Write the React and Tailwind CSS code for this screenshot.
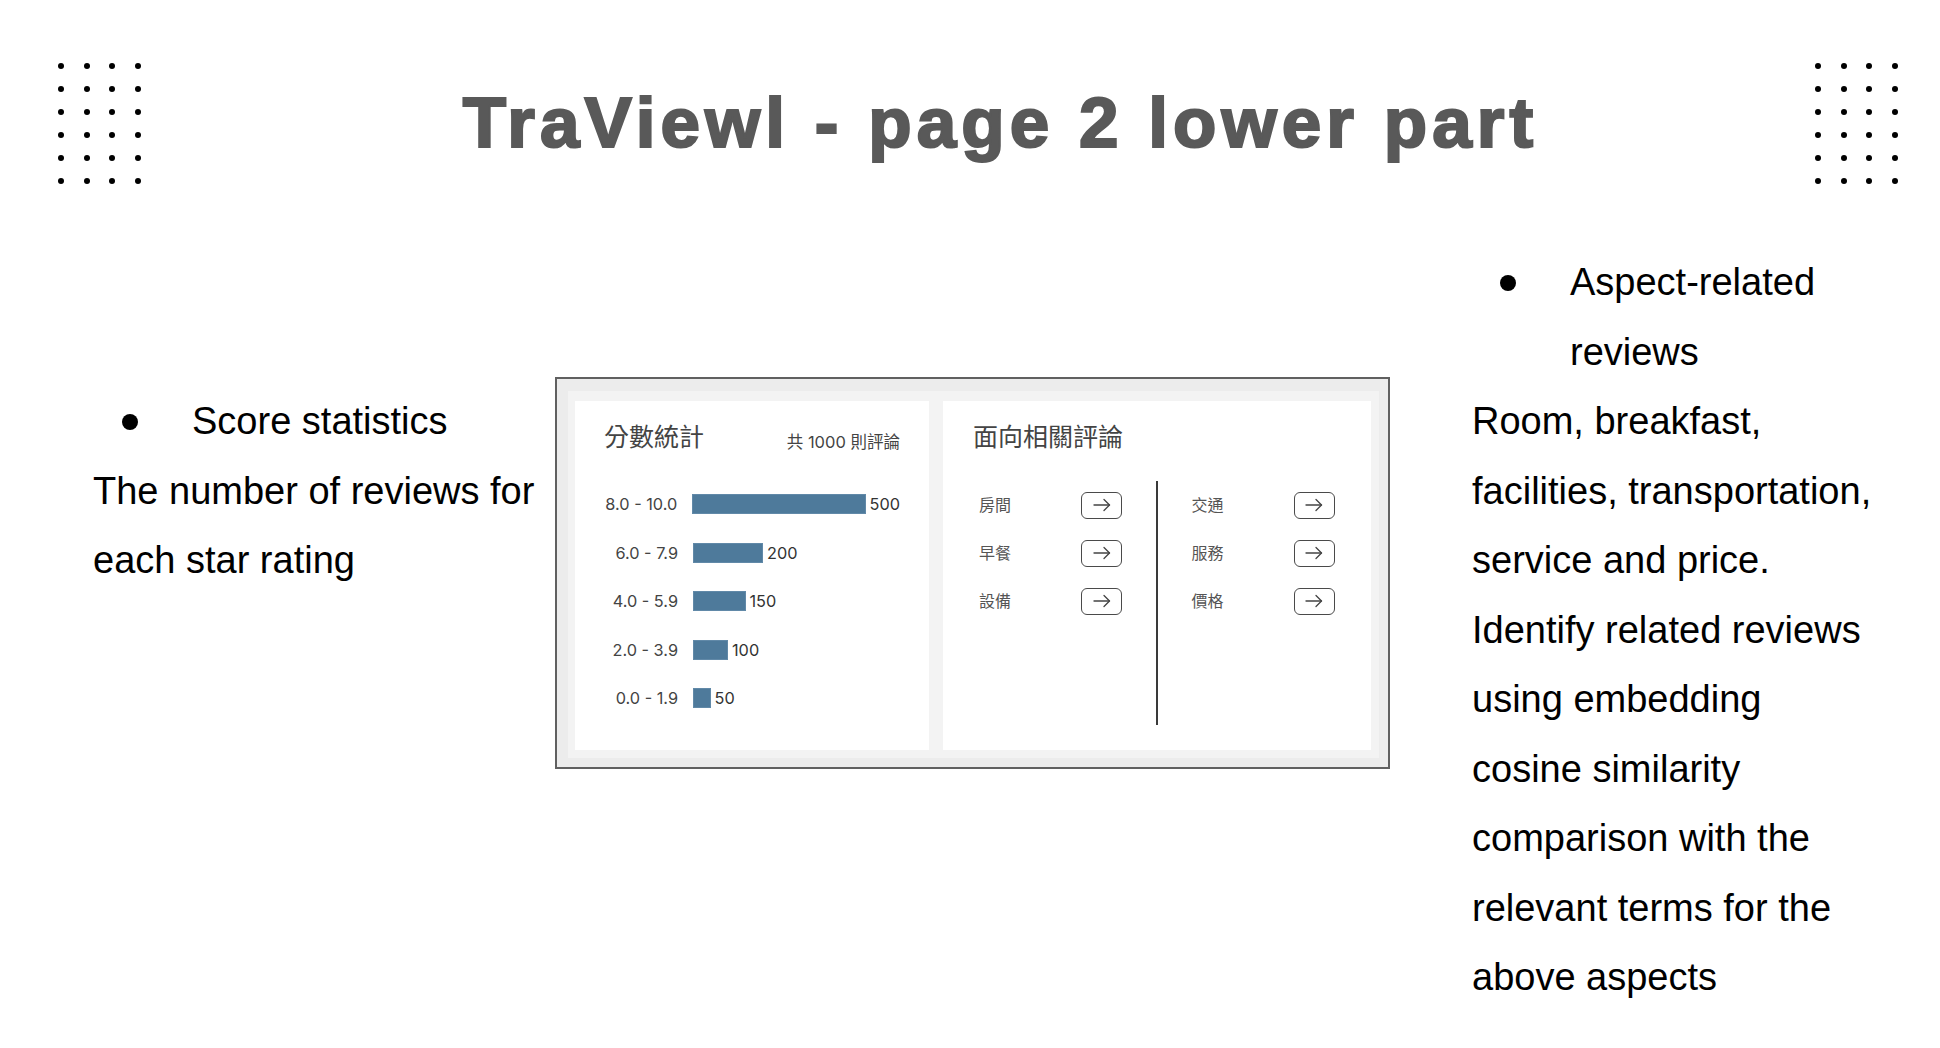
import React from 'react'

const scores = [
  ["8.0 - 10.0", 500],
  ["6.0 - 7.9", 200],
  ["4.0 - 5.9", 150],
  ["2.0 - 3.9", 100],
  ["0.0 - 1.9", 50],
];

const aspectsLeft = ["房間", "早餐", "設備"];
const aspectsRight = ["交通", "服務", "價格"];

function DotGrid() {
  return (
    <div className="grid grid-cols-4 gap-x-[19.67px] gap-y-[17px] shrink-0">
      {Array.from({ length: 24 }).map((_, i) => (
        <span key={i} className="block w-[6px] h-[6px] rounded-full bg-black" />
      ))}
    </div>
  )
}

function ArrowButton() {
  return (
    <div className="w-[41px] h-[27px] rounded-[6px] border-[1.5px] border-[#4a4a4a] flex items-center justify-center">
      <svg width="18" height="14" viewBox="0 0 18 14" fill="none" stroke="#444" strokeWidth="1.3" strokeLinecap="round" strokeLinejoin="round">
        <path d="M1 7H16.5" />
        <path d="M11 1.5L16.5 7L11 12.5" />
      </svg>
    </div>
  )
}

function AspectColumn({ items }) {
  return (
    <div className="w-[143px]">
      {items.map(name => (
        <div key={name} className="h-[48px] flex items-center justify-between">
          <span className="text-[16px] leading-none text-[#555]">{name}</span>
          <ArrowButton />
        </div>
      ))}
    </div>
  )
}

function ScorePanel() {
  return (
    <div className="mt-[131px] shrink-0 border-2 border-[#606060] bg-[#ececec] pl-[11px] pt-[12px] pr-[9px] pb-[9px] font-['Inter','Noto_Sans_CJK_TC',sans-serif]">
      <div className="bg-[#f3f3f3] pl-[7px] pt-[10px] pr-[8px] pb-[8px] flex gap-[14px]">
        {/* 分數統計 */}
        <div className="w-[354px] h-[349px] bg-white pl-[27px] pr-[29px] pt-[20px]">
          <div className="h-[32px] flex items-center justify-between pl-[2px]">
            <span className="text-[25px] leading-[32px] text-[#444]">分數統計</span>
            <span className="pt-[10px] text-[16.5px] leading-[20px] text-[#444]">共 1000 則評論</span>
          </div>
          <div className="mt-[27px]">
            {scores.map(([label, value]) => (
              <div key={label} className="h-[48.5px] flex items-center">
                <span className="w-[76px] text-right text-[16.3px] leading-none text-[#444] whitespace-nowrap">{label}</span>
                <span className="ml-[15px] h-[20px] bg-[#4e7a9b] border border-[#6189a8]" style={{ width: value * 0.35 }} />
                <span className="ml-[4px] text-[16.3px] leading-none text-[#333]">{value}</span>
              </div>
            ))}
          </div>
        </div>
        {/* 面向相關評論 */}
        <div className="w-[428px] h-[349px] bg-white pl-[30px] pt-[20px]">
          <div className="h-[32px] text-[25px] leading-[32px] text-[#444]">面向相關評論</div>
          <div className="mt-[28px] pl-[6px] flex items-start">
            <AspectColumn items={aspectsLeft} />
            <div className="ml-[34px] w-[1.5px] h-[244px] bg-[#3a3a3a]" />
            <div className="ml-[34px]">
              <AspectColumn items={aspectsRight} />
            </div>
          </div>
        </div>
      </div>
    </div>
  )
}

function Bullet({ children, className = "" }) {
  return (
    <div className={`flex items-start ${className}`}>
      <div className="h-[69.5px] flex items-center shrink-0">
        <span className="block w-4 h-4 rounded-full bg-black" />
      </div>
      <div className="ml-[54px]">{children}</div>
    </div>
  )
}

export default function App() {
  return (
    <div className="w-[1940px] h-[1048px] bg-white overflow-hidden text-black font-['Liberation_Sans',Arial,sans-serif]">
      <header className="flex items-start pt-[63px] pl-[58px] pr-[42px]">
        <DotGrid />
        <h1 className="flex-1 text-center mt-[24px] pl-[45px] text-[71px] leading-[71px] font-bold tracking-[5.05px] text-[#595959] [-webkit-text-stroke:2.2px_#595959] whitespace-nowrap">
          TraViewl - page 2 lower part
        </h1>
        <DotGrid />
      </header>

      <main className="flex items-start mt-[62px] text-[38px] leading-[69.5px]">
        <div className="ml-[93px] w-[462px] shrink-0 pt-[141px]">
          <Bullet className="ml-[29px]">Score statistics</Bullet>
          <p>The number of reviews for each star rating</p>
        </div>

        <ScorePanel />

        <div className="ml-[82px] w-[440px] shrink-0 pt-[2px]">
          <Bullet className="ml-[28px]">Aspect-related<br />reviews</Bullet>
          <p>Room, breakfast,<br />facilities, transportation,<br />service and price.</p>
          <p>Identify related reviews<br />using embedding<br />cosine similarity<br />comparison with the<br />relevant terms for the<br />above aspects</p>
        </div>
      </main>
    </div>
  )
}
